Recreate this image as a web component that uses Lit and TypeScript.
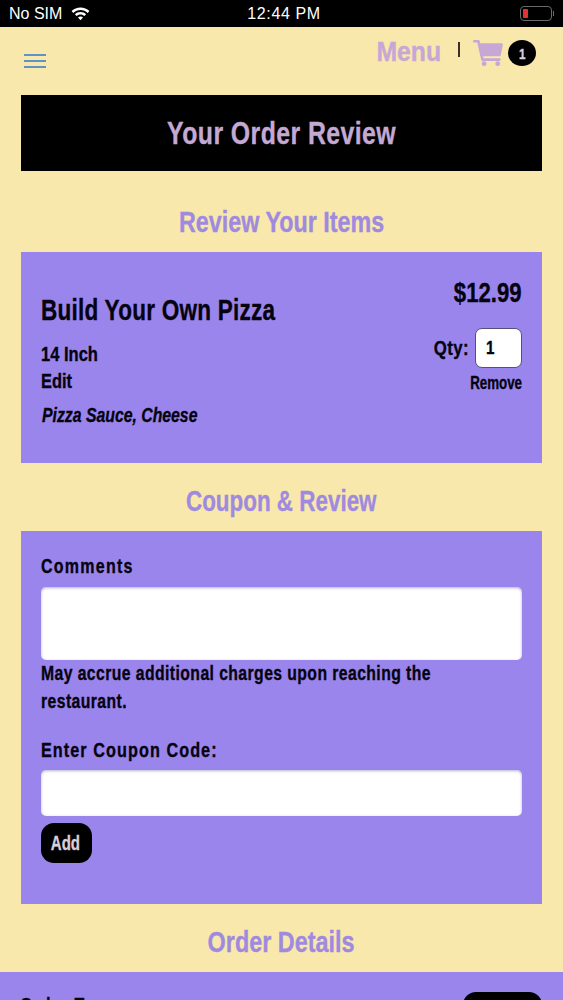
import { LitElement, html, css } from "lit";
import { customElement } from "lit/decorators.js";

@customElement("app-root")
export class AppRoot extends LitElement {
  static styles = css`
    :host { display: block; width: 563px; height: 1000px; overflow: hidden; background: #f8e8ab; font-family: "Liberation Sans", sans-serif; font-weight: 700; color: #05030f; }
    * { box-sizing: border-box; }
    .sx { display: inline-block; white-space: nowrap; -webkit-text-stroke: 0.35px currentColor; transform: scaleX(var(--k, .78)); transform-origin: left center; }
    .sx.r { transform-origin: right center; }
    .sx.m { transform-origin: center center; }
    .status { height: 27px; background: #000; color: #fff; display: grid; grid-template-columns: 1fr auto 1fr; align-items: center; padding: 0 9px 0 9px; font: 400 16px "Liberation Sans", sans-serif; }
    .status-left { display: flex; align-items: center; gap: 9px; }
    .time { letter-spacing: 0.6px; margin-left: 5px; }
    .battery { justify-self: end; display: flex; align-items: center; gap: 1px; }
    .battery-body { width: 32px; height: 15px; border: 1px solid #6b6b6b; border-radius: 4px; padding: 2px 2px; display: flex; }
    .battery-fill { width: 5px; background: #e0352f; border-radius: 1px; }
    .battery-cap { width: 1.5px; height: 5px; background: #6b6b6b; }
    .topbar { height: 68px; display: flex; justify-content: space-between; padding: 0 27px 0 24px; }
    .burger { width: 22px; margin-top: 27px; height: 14px; display: flex; flex-direction: column; justify-content: space-between; }
    .burger i { display: block; height: 2px; background: #5f93c6; }
    .top-right { display: flex; align-items: flex-start; padding-top: 8px; }
    .menu { --k: .885; font-size: 28px; line-height: 34px; color: #c6a7d6; }
    .sep { width: 2px; height: 15px; background: #3d2f2a; margin: 7px 13px 0 17px; }
    .cart { margin-top: 5px; }
    .badge { width: 28px; height: 26px; margin: 5px 0 0 5px; border-radius: 50%; background: #000; color: #d9cfe6; font-size: 15px; display: flex; align-items: center; justify-content: center; }
    .banner { margin: 0 21px; height: 76px; background: #000; color: #c3a9d3; font-size: 32px; display: flex; align-items: center; justify-content: center; letter-spacing: 0.55px; --k: .776; }
    h2 { margin: 0; text-align: center; color: #9f8adf; font-size: 29px; line-height: 34px; font-weight: 700; }
    .h-items { padding-top: 34px; height: 81px; --k: .804; }
    .panel { margin: 0 21px; background: #9a85ec; padding: 0 20px; }
    .item { height: 211px; display: flex; justify-content: space-between; }
    .item-left { padding-top: 41px; display: flex; flex-direction: column; align-items: flex-start; }
    .name { font-size: 29px; line-height: 34px; letter-spacing: 0.3px; --k: .777; }
    .size { font-size: 20px; line-height: 24px; margin-top: 15px; --k: .826; }
    .edit { font-size: 20px; line-height: 24px; margin-top: 3px; --k: .82; }
    .tops { font-size: 20px; line-height: 24px; margin-top: 10px; margin-left: 1px; font-style: italic; --k: .79; }
    .item-right { padding-top: 26px; display: flex; flex-direction: column; align-items: flex-end; }
    .price { font-size: 27px; line-height: 30px; --k: .82; }
    .qty { display: flex; align-items: center; gap: 6px; margin-top: 20px; font-size: 21px; letter-spacing: 0.5px; --k: .8; }
    .qty-box { width: 47px; height: 40px; border-radius: 7px; background: #fff; border: 1px solid #55507a; padding-left: 10px; display: flex; align-items: center; font-size: 19px; }
    .remove { font-size: 18px; line-height: 22px; margin-top: 4px; --k: .74; }
    .h-coupon { padding-top: 21px; height: 68px; --k: .773; }
    .coupon { height: 373px; padding-top: 23px; }
    .label { font-size: 20.5px; line-height: 24px; letter-spacing: 1.6px; --k: .78; display: block; }
    .field { background: #fff; border-radius: 5px; box-shadow: inset 0 1px 3px rgba(120,110,170,.55); }
    .comments { height: 73px; margin-top: 9px; }
    .note { margin-top: -1px; font-size: 20.5px; line-height: 28px; letter-spacing: 0.55px; --k: .768; }
    .code-label { margin-top: 23px; letter-spacing: 1.35px; --k: .79; }
    .code { height: 46px; margin-top: 8px; }
    .add { margin-top: 7px; width: 51px; height: 40px; border-radius: 13px; background: #000; color: #d8cfd8; font-size: 20px; display: flex; align-items: center; justify-content: center; --k: .75; }
    .add span { margin-left: -3px; }
    .h-details { padding-top: 21px; height: 68px; --k: .807; }
    .details { height: 60px; background: #9a85ec; padding: 20px 21px 0 20px; display: flex; justify-content: space-between; align-items: flex-start; }
    .type { font-size: 20.5px; line-height: 24px; letter-spacing: 1.4px; margin-top: 1px; --k: .78; }
    .pill { width: 79px; height: 40px; background: #000; border-radius: 13px; }
  `;

  render() {
    return html`
      <div class="status">
        <div class="status-left">
          <span>No SIM</span>
          <svg width="19" height="14" viewBox="0 0 19 14"><path fill="#fff" d="M9.5 0.6C6 0.6 2.9 1.9 0.6 4.1l1.7 1.8C4.2 4.1 6.7 3 9.5 3s5.3 1.1 7.2 2.9l1.7-1.8C16.1 1.9 13 .6 9.5.6zM9.5 5C7.3 5 5.4 5.8 3.9 7.2l1.7 1.8c1-1 2.4-1.6 3.9-1.6s2.9.6 3.9 1.6l1.7-1.8C13.6 5.8 11.7 5 9.5 5zM9.5 9.4c-1 0-1.9.4-2.5 1l2.5 2.8 2.5-2.8c-.6-.6-1.5-1-2.5-1z"/></svg>
        </div>
        <span class="time">12:44 PM</span>
        <div class="battery"><div class="battery-body"><div class="battery-fill"></div></div><div class="battery-cap"></div></div>
      </div>
      <div class="topbar">
        <div class="burger"><i></i><i></i><i></i></div>
        <div class="top-right">
          <span class="menu sx r">Menu</span>
          <span class="sep"></span>
          <svg class="cart" width="30" height="26" viewBox="0 0 31 28" preserveAspectRatio="none"><path fill="#c6a7d6" d="M0 1.4C0 .6.6 0 1.4 0h4.2c.7 0 1.3.5 1.4 1.2l.4 2.4H29.4c.9 0 1.6.8 1.4 1.7l-2.2 11c-.1.7-.7 1.2-1.4 1.2H10.6l.4 2.2h16.2c.8 0 1.4.6 1.4 1.4s-.6 1.4-1.4 1.4H9.8c-.7 0-1.3-.5-1.4-1.2L4.4 2.8H1.4C.6 2.8 0 2.2 0 1.4z"/><circle fill="#c6a7d6" cx="11.5" cy="25.5" r="2.5"/><circle fill="#c6a7d6" cx="25.5" cy="25.5" r="2.5"/></svg>
          <div class="badge"><span class="sx m">1</span></div>
        </div>
      </div>
      <div class="banner"><span class="sx m">Your Order Review</span></div>
      <h2 class="h-items"><span class="sx m">Review Your Items</span></h2>
      <div class="panel item">
        <div class="item-left">
          <span class="name sx">Build Your Own Pizza</span>
          <span class="size sx">14 Inch</span>
          <span class="edit sx">Edit</span>
          <span class="tops sx">Pizza Sauce, Cheese</span>
        </div>
        <div class="item-right">
          <span class="price sx r">$12.99</span>
          <div class="qty"><span class="sx r">Qty:</span><div class="qty-box"><span class="sx">1</span></div></div>
          <span class="remove sx r">Remove</span>
        </div>
      </div>
      <h2 class="h-coupon"><span class="sx m">Coupon &amp; Review</span></h2>
      <div class="panel coupon">
        <span class="label sx">Comments</span>
        <div class="field comments"></div>
        <div class="note">
          <span class="sx">May accrue additional charges upon reaching the</span><br />
          <span class="sx">restaurant.</span>
        </div>
        <span class="label code-label sx">Enter Coupon Code:</span>
        <div class="field code"></div>
        <div class="add"><span class="sx m">Add</span></div>
      </div>
      <h2 class="h-details"><span class="sx m">Order Details</span></h2>
      <div class="details">
        <span class="type sx">Order Type</span>
        <div class="pill"></div>
      </div>
    `;
  }
}
